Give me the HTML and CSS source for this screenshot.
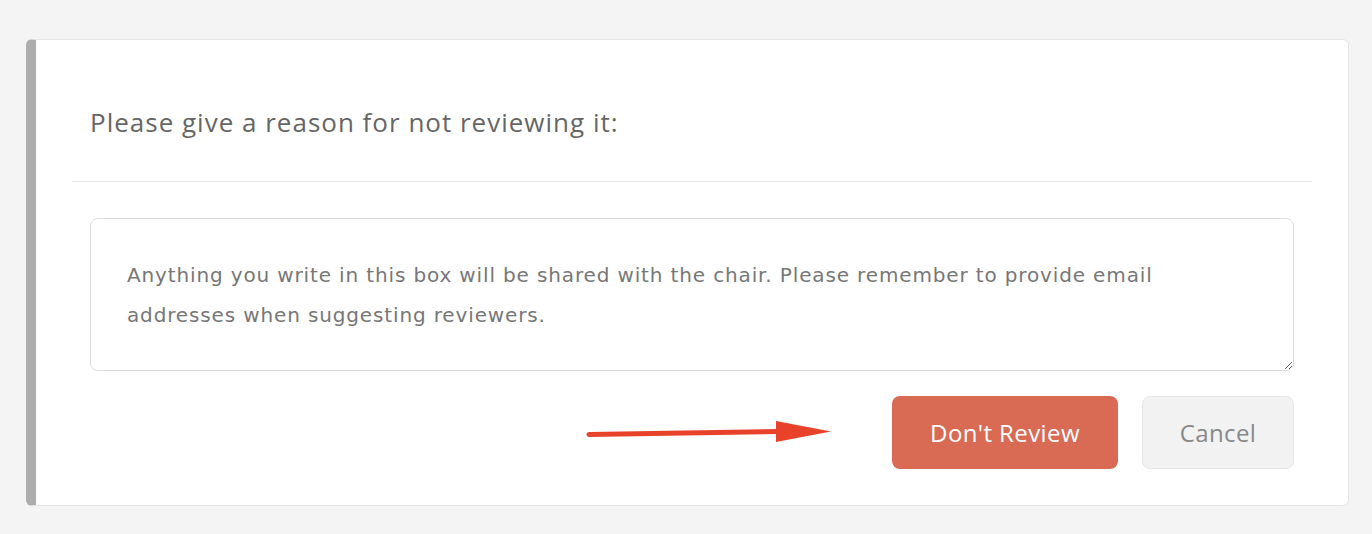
FILE: index.html
```html
<!DOCTYPE html>
<html lang="en">
<head>
    <meta charset="UTF-8">
    <meta name="viewport" content="width=device-width, initial-scale=1.0">
    <title>decline review</title>
    <link rel="stylesheet" href="styles.css">
</head>
<body>

<section class="panel">
    <header class="panel-head">
        <h2>Please give a reason for not reviewing it:</h2>
    </header>
    <div class="panel-body">
        <textarea class="reason" placeholder="Anything you write in this box will be shared with the chair. Please remember to provide email addresses when suggesting reviewers."></textarea>
        <div class="actions">
            <svg class="pointer" width="250" height="24" viewBox="0 0 250 24">
                <path d="M4 15.5 L194 12.5" stroke="#e8432a" stroke-width="5" stroke-linecap="round" fill="none"/>
                <polygon points="191,2 246,12.5 191,23" fill="#e8432a"/>
            </svg>
            <button class="btn btn-danger">Don't Review</button>
            <button class="btn btn-plain">Cancel</button>
        </div>
    </div>
</section>

</body>
</html>
```

FILE: styles.css
```css
:root{
    --text-color: #666666;
    --line-color: #e6e6e6;
}

*{
    padding: 0;
    margin: 0;
    box-sizing: border-box;
}

body{
    background: #f4f4f4;
    padding: 39px 23px 0 26px;
    font-family: 'Open Sans', 'Noto Sans', sans-serif;
}

.panel{
    background: #fff;
    border: 1px solid var(--line-color);
    border-left: 10px solid #adadad;
    border-radius: 6px;
    padding: 0 36px 36px 36px;
    height: 467px;
}

.panel-head{
    padding: 64px 18px 0;
    height: 142px;
    border-bottom: 1px solid #e9e9e9;
}

.panel-head h2{
    font-weight: 400;
    font-size: 26px;
    line-height: 36px;
    letter-spacing: 1px;
    color: var(--text-color);
}

.panel-body{
    padding: 36px 18px 0;
}

.reason{
    display: block;
    width: 100%;
    height: 153px;
    border: 1px solid #dcdcdc;
    border-radius: 8px;
    padding: 36px 36px;
    font-family: 'DejaVu Sans', Verdana, sans-serif;
    font-size: 20px;
    line-height: 40px;
    letter-spacing: 0.86px;
    color: #777;
    resize: vertical;
    outline: none;
}

.reason::placeholder{
    color: #777;
}

.actions{
    display: flex;
    justify-content: flex-end;
    align-items: center;
    gap: 24px;
    margin-top: 25px;
    position: relative;
}

.pointer{
    position: absolute;
    left: 495px;
    top: 23px;
}

.btn{
    all: unset;
    box-sizing: border-box;
    height: 73px;
    border-radius: 8px;
    font-family: 'Open Sans', 'Noto Sans', sans-serif;
    font-size: 24px;
    letter-spacing: 0.4px;
    text-align: center;
    cursor: pointer;
}

.btn-danger{
    width: 226px;
    background: #d96b55;
    color: #fff;
}

.btn-plain{
    width: 152px;
    background: #f2f2f2;
    border: 1px solid var(--line-color);
    color: #888;
}
```
